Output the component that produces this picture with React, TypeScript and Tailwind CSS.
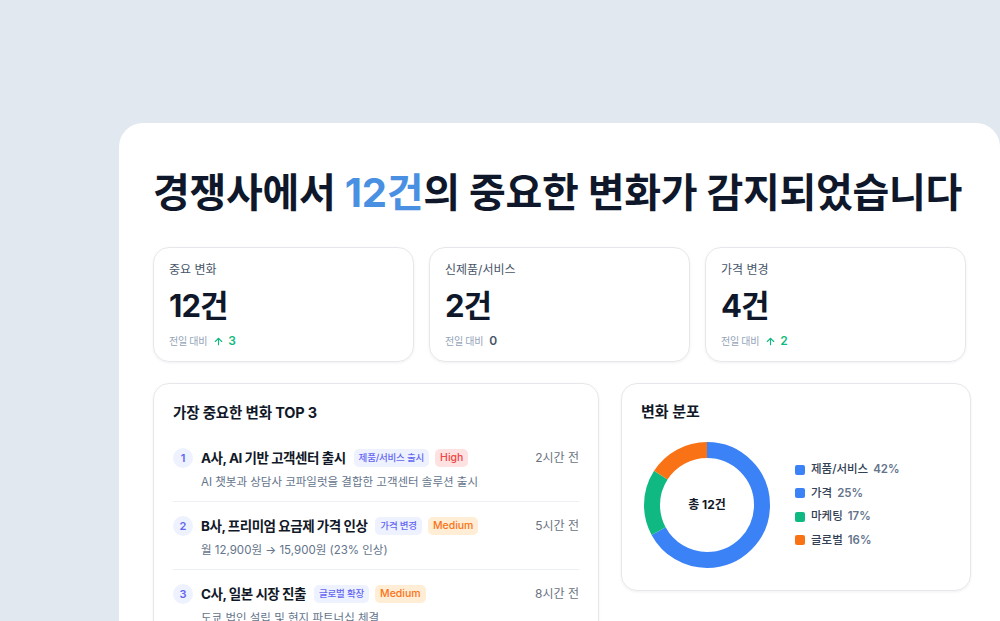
import React from "react";
import { ArrowUp } from "lucide-react";

interface Stat {
  label: string;
  value: string;
  delta: number;
}

interface Change {
  rank: number;
  title: string;
  tag: string;
  level: "High" | "Medium";
  desc: string;
  time: string;
}

const stats: Stat[] = [
  { label: "중요 변화", value: "12건", delta: 3 },
  { label: "신제품/서비스", value: "2건", delta: 0 },
  { label: "가격 변경", value: "4건", delta: 2 },
];

const changes: Change[] = [
  { rank: 1, title: "A사, AI 기반 고객센터 출시", tag: "제품/서비스 출시", level: "High", desc: "AI 챗봇과 상담사 코파일럿을 결합한 고객센터 솔루션 출시", time: "2시간 전" },
  { rank: 2, title: "B사, 프리미엄 요금제 가격 인상", tag: "가격 변경", level: "Medium", desc: "월 12,900원 → 15,900원 (23% 인상)", time: "5시간 전" },
  { rank: 3, title: "C사, 일본 시장 진출", tag: "글로벌 확장", level: "Medium", desc: "도쿄 법인 설립 및 현지 파트너십 체결", time: "8시간 전" },
];

const distribution = [
  { name: "제품/서비스", pct: 42, color: "#3b82f6" },
  { name: "가격", pct: 25, color: "#3b82f6" },
  { name: "마케팅", pct: 17, color: "#10b981" },
  { name: "글로벌", pct: 16, color: "#f97316" },
];

// donut segments: both blue slices are drawn as one arc
const arcs = [
  { pct: 67, color: "#3b82f6" },
  { pct: 17, color: "#10b981" },
  { pct: 16, color: "#f97316" },
];

function Donut() {
  const r = 55;
  const c = 2 * Math.PI * r;
  let offset = 0;
  return (
    <div className="relative w-[126px] h-[126px] shrink-0">
      <svg width="126" height="126" viewBox="0 0 126 126" className="-rotate-90">
        {arcs.map((a) => {
          const len = (a.pct / 100) * c;
          const el = (
            <circle
              key={a.color}
              cx="63"
              cy="63"
              r={r}
              fill="none"
              stroke={a.color}
              strokeWidth="16"
              strokeDasharray={`${len} ${c - len}`}
              strokeDashoffset={-offset}
            />
          );
          offset += len;
          return el;
        })}
      </svg>
      <div className="absolute inset-0 flex items-center justify-center text-[12px] font-bold text-[#111827]">
        총 12건
      </div>
    </div>
  );
}

export default function App() {
  return (
    <div className="h-[621px] overflow-hidden bg-[#e2e8f0] font-['Inter','Noto_Sans_CJK_KR',sans-serif] pl-[119px] pt-[123px]">
      <div className="w-[881px] h-[560px] bg-white rounded-t-[24px] pl-[34px] pt-[46px]">
        {/* Headline */}
        <h1 className="text-[40px] leading-[48px] font-bold tracking-[-0.007em] text-[#0f172a]">
          경쟁사에서 <span className="text-[#4a90e2]">12건</span>의 중요한 변화가 감지되었습니다
        </h1>

        {/* Stat cards */}
        <div className="mt-[30px] grid grid-cols-[261px_261px_261px] gap-[15px]">
          {stats.map((s) => (
            <div key={s.label} className="h-[115px] rounded-[16px] border border-[#e5e7eb] shadow-[0_1px_3px_rgba(15,23,42,0.06)] px-[15px] pt-[14px]">
              <div className="text-[12px] leading-[16px] text-[#475569]">{s.label}</div>
              <div className="mt-[10px] text-[31px] leading-[36px] font-bold tracking-[-0.03em] text-[#0f172a]">{s.value}</div>
              <div className="mt-[9px] flex items-center gap-[6px] leading-[16px]">
                <span className="text-[10px] tracking-[-0.03em] text-[#94a3b8]">전일 대비</span>
                {s.delta > 0 ? (
                  <span className="flex items-center gap-[4px] text-[12px] font-semibold text-[#10b981]">
                    <ArrowUp className="w-[11px] h-[11px]" strokeWidth={2.5} />
                    {s.delta}
                  </span>
                ) : (
                  <span className="text-[12px] font-semibold text-[#475569]">{s.delta}</span>
                )}
              </div>
            </div>
          ))}
        </div>

        <div className="mt-[21px] grid grid-cols-[446px_350px] gap-[22px] items-start">
          {/* Top 3 changes */}
          <div className="h-[260px] rounded-[16px] border border-[#e5e7eb] shadow-[0_1px_3px_rgba(15,23,42,0.06)] px-[19px] pt-[18px]">
            <h2 className="text-[14.5px] leading-[22px] font-bold tracking-[-0.01em] text-[#111827]">가장 중요한 변화 TOP 3</h2>
            <div className="mt-[24px]">
              {changes.map((c, i) => (
                <div key={c.rank} className={i > 0 ? "border-t border-[#eceff3] pt-[14px]" : ""}>
                  <div className="flex items-center h-[20px]">
                    <span className="w-[20px] h-[20px] rounded-full bg-[#eef2ff] text-[#6366f1] text-[11px] font-semibold flex items-center justify-center">
                      {c.rank}
                    </span>
                    <span className="ml-[8px] text-[13.5px] font-bold tracking-[-0.035em] text-[#111827]">{c.title}</span>
                    <span className="ml-[8px] h-[18px] px-[5px] rounded-[5px] bg-[#eef2ff] text-[#6366f1] text-[9.5px] font-medium tracking-[-0.02em] flex items-center">
                      {c.tag}
                    </span>
                    <span
                      className={
                        c.level === "High"
                          ? "ml-[6px] h-[18px] px-[5px] rounded-[5px] bg-[#fee2e2] text-[#ef4444] text-[10.5px] font-medium flex items-center"
                          : "ml-[6px] h-[18px] px-[5px] rounded-[5px] bg-[#ffedd5] text-[#f97316] text-[10.5px] font-medium flex items-center"
                      }
                    >
                      {c.level}
                    </span>
                    <span className="ml-auto text-[12px] text-[#6b7280]">{c.time}</span>
                  </div>
                  <div className="mt-[6px] pl-[28px] text-[11.5px] leading-[16px] text-[#64748b] pb-[11px]">{c.desc}</div>
                </div>
              ))}
            </div>
          </div>

          {/* Distribution */}
          <div className="h-[208px] rounded-[16px] border border-[#e5e7eb] shadow-[0_1px_3px_rgba(15,23,42,0.06)] pl-[19px] pt-[17px]">
            <h2 className="text-[15px] leading-[22px] font-bold text-[#111827]">변화 분포</h2>
            <div className="mt-[19px] ml-[3px] flex items-center">
              <Donut />
              <div className="ml-[25px] flex flex-col gap-[7.5px]">
                {distribution.map((d) => (
                  <div key={d.name} className="flex items-center h-[16px] text-[11.5px]">
                    <span className="w-[10px] h-[10px] rounded-[2px]" style={{ backgroundColor: d.color }} />
                    <span className="ml-[6px] font-medium text-[#334155]">{d.name}</span>
                    <span className="ml-[5px] font-semibold text-[#64748b]">{d.pct}%</span>
                  </div>
                ))}
              </div>
            </div>
          </div>
        </div>
      </div>
    </div>
  );
}
